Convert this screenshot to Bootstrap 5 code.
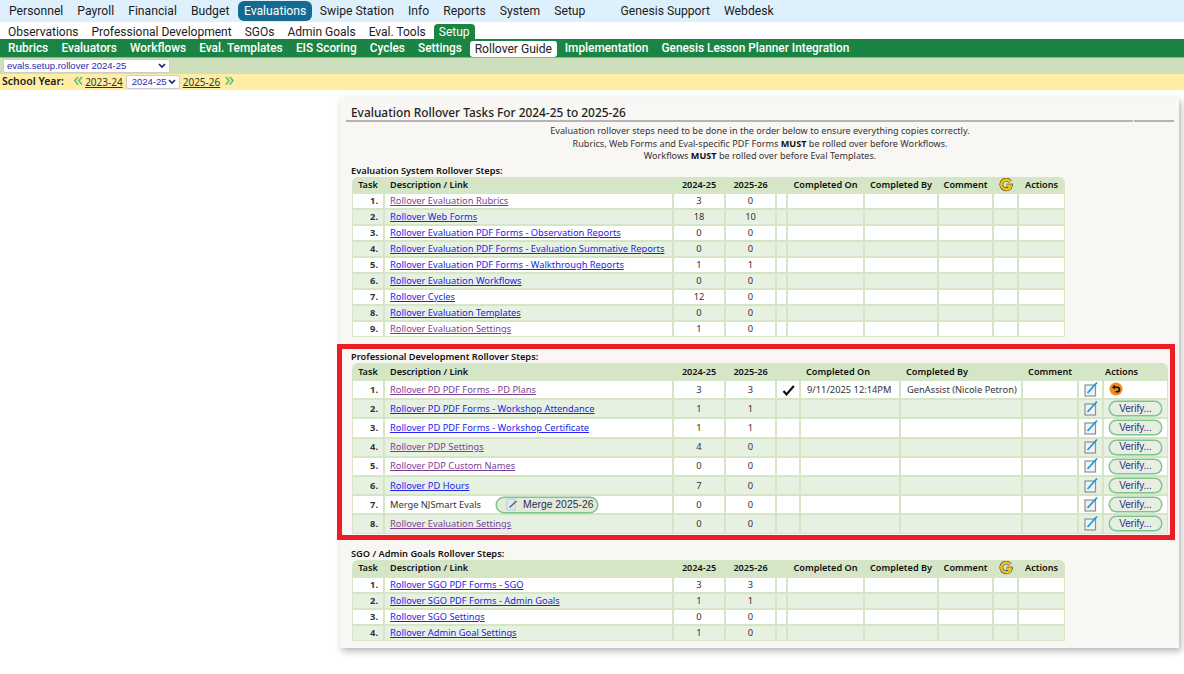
<!DOCTYPE html>
<html lang="en"><head><meta charset="utf-8"><title>Evaluation Rollover</title>
<link href="https://cdn.jsdelivr.net/npm/bootstrap@5.3.0/dist/css/bootstrap.min.css" rel="stylesheet">
<style>
body{background:#fff;color:#222;font-family:"Noto Sans",sans-serif;font-size:10px;overflow:hidden;height:674px;position:relative}
.bar-top,.bar-sub,.bar-grn{font-family:Roboto,sans-serif;font-size:12.2px}
.bar-top{background:#dff0fd;height:22px;padding-left:9px;gap:14px}
.bar-top a,.bar-sub a,.bar-grn a{color:#1c1c1c;text-decoration:none;white-space:nowrap}
.bar-top .on{background:#156a92;color:#fff;border-radius:6px;padding:1px 5.5px;margin:0 -6px 0 -5px}
.bar-top .gap-far{margin-left:21px}
.bar-sub{height:17px;padding:2px 0 0 8px;gap:13px;font-size:12px}
.bar-sub .on{background:#1b8444;color:#fff;border-radius:4px 4px 0 0;padding:0 5px;height:16px;line-height:16px;margin:0 0 -1px -5px}
.bar-grn{background:#1b8444;height:19px;padding:1px 0 0 8px;gap:13.2px;border-bottom:1px solid #9aa89a;font-size:11.85px}
.bar-grn a{color:#fff;font-weight:500}
.bar-grn .on{background:#fff;color:#222;border-radius:3px;padding:0 5px;margin:0 -5.5px;height:16px;line-height:16px;font-weight:400;font-size:12.1px}
.bar-sel{background:#cde0bb;height:16px;padding-left:3px}
.bar-yr{background:#feeea3;height:16px;font-size:10.5px;padding-left:2px}
.tiny-sel{appearance:none;-webkit-appearance:none;font-family:"Liberation Sans",sans-serif;font-size:9.5px;color:#2a2aa5;height:14px;line-height:12px;padding:0 0 0 3px;border:1px solid #ccc;border-radius:2px;background:#fff url("data:image/svg+xml,%3Csvg xmlns='http://www.w3.org/2000/svg' width='8' height='6'%3E%3Cpath d='M1 1l3 3 3-3' fill='none' stroke='%23222280' stroke-width='1.7'/%3E%3C/svg%3E") no-repeat right 3px center}
.sel-a{width:167px}.sel-b{width:54px;margin:0 3px 0 3px;padding-left:5px}
.bar-yr a{color:#333;font-size:10px}
.chev{color:#56c07a;font-size:20px;line-height:14px;height:16px;position:relative;top:-2px}
.chev-l{margin:0 2px 0 9px}
.panel{margin:8px 0 0 340px;width:839px;height:550px;background:#f9f7f4;box-shadow:2px 3px 7px rgba(0,0,0,.3);padding:0 5px 0 6px}
.ttl{position:relative;font-size:11.9px;font-weight:500;color:#222;padding:6px 0 0 5px;height:24px;margin:0;border-bottom:2px solid #b5b5b5;line-height:17px}
.ttl::after{content:"";position:absolute;right:40px;bottom:-2px;width:1px;height:2px;background:#f9f7f4}
.intro{text-align:center;font-size:9.1px;line-height:12.7px;margin:3px 0 0;height:39px;color:#333}
.intro b{color:#111}
.lbl{font-size:9.25px;font-weight:600;color:#111;margin:0 0 0 5px;line-height:13px;height:13px}
.rt{table-layout:fixed;border-collapse:separate;border-spacing:0;margin:0 0 0 6px;font-size:9.3px;color:#333}
.rt th{background:#d4e6c6;font-size:9.15px;font-weight:600;color:#111;padding:0 3px;height:16px;line-height:14px;text-align:center;white-space:nowrap}
.rt th:first-child{border-top-left-radius:6px}
.rt th:last-child{border-top-right-radius:6px}
.rt td{padding:0 3px;height:16px;line-height:12px;text-align:center;background:#fff;border:1px solid #d4e6c6;white-space:nowrap}
.rt tr:nth-child(even) td{background:#e7f1e2}
.rt .d{text-align:left;padding-left:6px}
.rt .n{text-align:right;font-weight:700;padding-right:5px}
.rt .l{text-align:left;padding-left:5px}
.rt .lf{text-align:left;padding-left:6px}
.rt .lf2{text-align:left;padding-left:2px}
.wa{width:713px}.wb{width:816px}
.c1{width:32px}.c2{width:289px}.c3{width:52px}.c4{width:51px}
.a5{width:11px}.a6{width:77px}.a7{width:74px}.a8{width:55px}.a9{width:25px}.a10{width:47px}
.b5{width:24px}.b6{width:100px}.b7{width:122px}.b8{width:56px}.b9{width:25px}.b10{width:65px}
.big td{height:19.2px;padding-top:0;padding-bottom:0}
.big th,.hx th{height:17px}
.rt a{color:#2222ee}
.rt a.v{color:#7b3f98}
.vfy{font-family:"Liberation Sans",sans-serif;font-size:10px;line-height:12px;color:#2c2c7a;background:#e7efe3;border:1px solid #7cc48b;border-radius:9px;padding:0;width:53px;height:15px;display:inline-block;vertical-align:middle;box-shadow:0 0 0 .5px #7cc48b}
.rt .mrg{font-size:10.4px;color:#2c2c5a;width:102px;height:16px;margin-left:15px;line-height:13px;display:inline-flex;align-items:center;gap:5px;padding-left:9px;background:#e3ead9}
.redbox{position:absolute;left:337px;top:344px;width:838px;height:196px;border:5px solid #ed1c24;pointer-events:none}
.sec2,.sec3{margin-top:13px}
svg{display:inline-block;vertical-align:middle}
.ed{position:relative;top:-1px}
.undo{margin-left:2px;position:relative;top:-1px}
</style></head><body>
<svg width="0" height="0" class="position-absolute"><defs>
<symbol id="gg" viewBox="0 0 14 14"><path d="M11.2 3.6A4.9 4.9 0 1 0 12 7.6H7.6" fill="none" stroke="#1f2a55" stroke-width="3.6"/><path d="M11.2 3.6A4.9 4.9 0 1 0 12 7.6H7.6" fill="none" stroke="#f3c215" stroke-width="2.7"/></symbol>
<symbol id="edt" viewBox="0 0 14 16"><rect x="1" y="4" width="10.5" height="11" fill="#f2f2f2" stroke="#8f8f8f" stroke-width="1.2"/><path d="M3.5 12L13 1.5" stroke="#1c9ad6" stroke-width="1.8"/></symbol>
</defs></svg>
<nav class="d-flex align-items-center bar-top">
<a href="#">Personnel</a><a href="#">Payroll</a><a href="#">Financial</a><a href="#">Budget</a><a href="#" class="on">Evaluations</a><a href="#">Swipe Station</a><a href="#">Info</a><a href="#">Reports</a><a href="#">System</a><a href="#">Setup</a><a href="#" class="gap-far">Genesis Support</a><a href="#">Webdesk</a>
</nav>
<nav class="d-flex align-items-center bar-sub">
<a href="#">Observations</a><a href="#">Professional Development</a><a href="#">SGOs</a><a href="#">Admin Goals</a><a href="#">Eval. Tools</a><a href="#" class="on">Setup</a>
</nav>
<nav class="d-flex align-items-center bar-grn">
<a href="#">Rubrics</a><a href="#">Evaluators</a><a href="#">Workflows</a><a href="#">Eval. Templates</a><a href="#">EIS Scoring</a><a href="#">Cycles</a><a href="#">Settings</a><a href="#" class="on">Rollover Guide</a><a href="#">Implementation</a><a href="#">Genesis Lesson Planner Integration</a>
</nav>
<div class="d-flex align-items-center bar-sel"><select class="tiny-sel sel-a"><option>evals.setup.rollover 2024-25</option></select></div>
<div class="d-flex align-items-center bar-yr"><b class="fw-semibold">School Year:</b><span class="chev chev-l">«</span><a href="#">2023-24</a><select class="tiny-sel sel-b"><option>2024-25</option></select><a href="#">2025-26</a><span class="chev ms-1">»</span></div>

<main class="panel">
<h1 class="ttl">Evaluation Rollover Tasks For 2024-25 to 2025-26</h1>
<div class="intro">Evaluation rollover steps need to be done in the order below to ensure everything copies correctly.<br>Rubrics, Web Forms and Eval-specific PDF Forms <b>MUST</b> be rolled over before Workflows.<br>Workflows <b>MUST</b> be rolled over before Eval Templates.</div>

<p class="lbl">Evaluation System Rollover Steps:</p>
<table class="rt wa"><colgroup><col class="c1"><col class="c2"><col class="c3"><col class="c4"><col class="a5"><col class="a6"><col class="a7"><col class="a8"><col class="a9"><col class="a10"></colgroup>
<thead><tr><th>Task</th><th class="d">Description / Link</th><th>2024-25</th><th>2025-26</th><th></th><th>Completed On</th><th>Completed By</th><th>Comment</th><th><svg width="14" height="14"><use href="#gg"/></svg></th><th>Actions</th></tr></thead>
<tbody>
<tr><td class="n">1.</td><td class="l"><a class="v" href="#">Rollover Evaluation Rubrics</a></td><td>3</td><td>0</td><td></td><td></td><td></td><td></td><td></td><td></td></tr>
<tr><td class="n">2.</td><td class="l"><a href="#">Rollover Web Forms</a></td><td>18</td><td>10</td><td></td><td></td><td></td><td></td><td></td><td></td></tr>
<tr><td class="n">3.</td><td class="l"><a href="#">Rollover Evaluation PDF Forms - Observation Reports</a></td><td>0</td><td>0</td><td></td><td></td><td></td><td></td><td></td><td></td></tr>
<tr><td class="n">4.</td><td class="l"><a href="#">Rollover Evaluation PDF Forms - Evaluation Summative Reports</a></td><td>0</td><td>0</td><td></td><td></td><td></td><td></td><td></td><td></td></tr>
<tr><td class="n">5.</td><td class="l"><a href="#">Rollover Evaluation PDF Forms - Walkthrough Reports</a></td><td>1</td><td>1</td><td></td><td></td><td></td><td></td><td></td><td></td></tr>
<tr><td class="n">6.</td><td class="l"><a href="#">Rollover Evaluation Workflows</a></td><td>0</td><td>0</td><td></td><td></td><td></td><td></td><td></td><td></td></tr>
<tr><td class="n">7.</td><td class="l"><a href="#">Rollover Cycles</a></td><td>12</td><td>0</td><td></td><td></td><td></td><td></td><td></td><td></td></tr>
<tr><td class="n">8.</td><td class="l"><a href="#">Rollover Evaluation Templates</a></td><td>0</td><td>0</td><td></td><td></td><td></td><td></td><td></td><td></td></tr>
<tr><td class="n">9.</td><td class="l"><a class="v" href="#">Rollover Evaluation Settings</a></td><td>1</td><td>0</td><td></td><td></td><td></td><td></td><td></td><td></td></tr>
</tbody></table>

<p class="lbl sec2">Professional Development Rollover Steps:</p>
<table class="rt wb big"><colgroup><col class="c1"><col class="c2"><col class="c3"><col class="c4"><col class="b5"><col class="b6"><col class="b7"><col class="b8"><col class="b9"><col class="b10"></colgroup>
<thead><tr><th>Task</th><th class="d">Description / Link</th><th>2024-25</th><th>2025-26</th><th></th><th class="lf">Completed On</th><th class="lf">Completed By</th><th>Comment</th><th></th><th class="lf2">Actions</th></tr></thead>
<tbody>
<tr><td class="n">1.</td><td class="l"><a class="v" href="#">Rollover PD PDF Forms - PD Plans</a></td><td>3</td><td>3</td><td><svg width="13" height="11" viewBox="0 0 13 11"><path d="M1.5 6l3 3.4L11.8 1" fill="none" stroke="#111" stroke-width="2.2"/></svg></td><td class="lf">9/11/2025 12:14PM</td><td class="lf">GenAssist (Nicole Petron)</td><td></td><td><svg class="ed" width="14" height="16"><use href="#edt"/></svg></td><td class="text-start"><svg class="undo" width="14" height="14" viewBox="0 0 14 14"><circle cx="7" cy="7" r="6.5" fill="#ec8a1d"/><path d="M5 5.2h3.2a2.2 2.2 0 0 1 0 4.6H6.5" fill="none" stroke="#111" stroke-width="1.6"/><path d="M6 2.8L3 5.2L6 7.4z" fill="#111"/></svg></td></tr>
<tr><td class="n">2.</td><td class="l"><a href="#">Rollover PD PDF Forms - Workshop Attendance</a></td><td>1</td><td>1</td><td></td><td></td><td></td><td></td><td><svg class="ed" width="14" height="16"><use href="#edt"/></svg></td><td><button type="button" class="vfy">Verify...</button></td></tr>
<tr><td class="n">3.</td><td class="l"><a href="#">Rollover PD PDF Forms - Workshop Certificate</a></td><td>1</td><td>1</td><td></td><td></td><td></td><td></td><td><svg class="ed" width="14" height="16"><use href="#edt"/></svg></td><td><button type="button" class="vfy">Verify...</button></td></tr>
<tr><td class="n">4.</td><td class="l"><a class="v" href="#">Rollover PDP Settings</a></td><td>4</td><td>0</td><td></td><td></td><td></td><td></td><td><svg class="ed" width="14" height="16"><use href="#edt"/></svg></td><td><button type="button" class="vfy">Verify...</button></td></tr>
<tr><td class="n">5.</td><td class="l"><a class="v" href="#">Rollover PDP Custom Names</a></td><td>0</td><td>0</td><td></td><td></td><td></td><td></td><td><svg class="ed" width="14" height="16"><use href="#edt"/></svg></td><td><button type="button" class="vfy">Verify...</button></td></tr>
<tr><td class="n">6.</td><td class="l"><a href="#">Rollover PD Hours</a></td><td>7</td><td>0</td><td></td><td></td><td></td><td></td><td><svg class="ed" width="14" height="16"><use href="#edt"/></svg></td><td><button type="button" class="vfy">Verify...</button></td></tr>
<tr><td class="n">7.</td><td class="l">Merge NJSmart Evals<button type="button" class="vfy mrg"><svg width="12" height="13" viewBox="0 0 12 13"><rect x="1" y="1" width="8" height="11" fill="#dcebf7" stroke="#b9cfe2"/><path d="M3.5 9.5L10.5 3" stroke="#555" stroke-width="1.2"/></svg>Merge 2025-26</button></td><td>0</td><td>0</td><td></td><td></td><td></td><td></td><td><svg class="ed" width="14" height="16"><use href="#edt"/></svg></td><td><button type="button" class="vfy">Verify...</button></td></tr>
<tr><td class="n">8.</td><td class="l"><a class="v" href="#">Rollover Evaluation Settings</a></td><td>0</td><td>0</td><td></td><td></td><td></td><td></td><td><svg class="ed" width="14" height="16"><use href="#edt"/></svg></td><td><button type="button" class="vfy">Verify...</button></td></tr>
</tbody></table>

<p class="lbl sec3">SGO / Admin Goals Rollover Steps:</p>
<table class="rt wa hx"><colgroup><col class="c1"><col class="c2"><col class="c3"><col class="c4"><col class="a5"><col class="a6"><col class="a7"><col class="a8"><col class="a9"><col class="a10"></colgroup>
<thead><tr><th>Task</th><th class="d">Description / Link</th><th>2024-25</th><th>2025-26</th><th></th><th>Completed On</th><th>Completed By</th><th>Comment</th><th><svg width="14" height="14"><use href="#gg"/></svg></th><th>Actions</th></tr></thead>
<tbody>
<tr><td class="n">1.</td><td class="l"><a href="#">Rollover SGO PDF Forms - SGO</a></td><td>3</td><td>3</td><td></td><td></td><td></td><td></td><td></td><td></td></tr>
<tr><td class="n">2.</td><td class="l"><a href="#">Rollover SGO PDF Forms - Admin Goals</a></td><td>1</td><td>1</td><td></td><td></td><td></td><td></td><td></td><td></td></tr>
<tr><td class="n">3.</td><td class="l"><a href="#">Rollover SGO Settings</a></td><td>0</td><td>0</td><td></td><td></td><td></td><td></td><td></td><td></td></tr>
<tr><td class="n">4.</td><td class="l"><a href="#">Rollover Admin Goal Settings</a></td><td>1</td><td>0</td><td></td><td></td><td></td><td></td><td></td><td></td></tr>
</tbody></table>
</main>
<div class="redbox"></div>
<script src="https://cdn.jsdelivr.net/npm/bootstrap@5.3.0/dist/js/bootstrap.bundle.min.js"></script>
</body></html>
